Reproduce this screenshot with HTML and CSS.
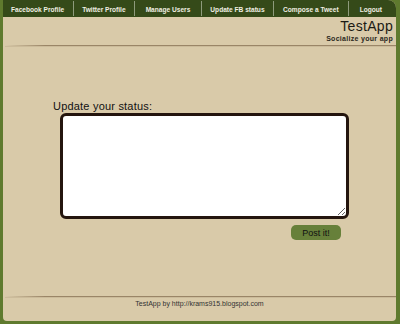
FILE: index.html
```html
<!DOCTYPE html>
<html lang="en">
<head>
  <meta charset="UTF-8" />
  <title>TestApp | Update FB status</title>
  <link rel="stylesheet" href="styles.css">
</head>
<body>

<div class="page">
  <ul class="menu">
    <li><a href="#">Facebook Profile</a></li>
    <li><a href="#">Twitter Profile</a></li>
    <li class="wide"><a href="#">Manage Users</a></li>
    <li><a href="#">Update FB status</a></li>
    <li><a href="#">Compose a Tweet</a></li>
    <li><a href="#">Logout</a></li>
  </ul>

  <div class="header">
    <h1>TestApp</h1>
    <p>Socialize your app</p>
  </div>
  <div class="rule"></div>

  <div class="content">
    <form class="status-form">
      <h3>Update your status:</h3>
      <textarea class="status-box"></textarea>
      <div class="actions">
        <button type="button">Post it!</button>
      </div>
    </form>
  </div>

  <div class="rule"></div>
  <div class="footer">TestApp by http://krams915.blogspot.com</div>
</div>

</body>
</html>
```

FILE: styles.css
```css
html, body {
  margin: 0;
  height: 100%;
}
body {
  font-family: 'Liberation Sans', Arial, sans-serif;
  background-color: #5f7a2e;
}
.page {
  margin: 0 4px 0 3px;
  height: 321px;
  background: #d9caa9;
  border-radius: 0 8px 4px 4px;
  display: flex;
  flex-direction: column;
}
.menu {
  list-style: none;
  margin: 0;
  padding: 0;
  height: 17px;
  display: flex;
  align-items: center;
  background: #354a19;
  border-radius: 0 8px 0 0;
}
.menu li {
  padding: 0 8.5px;
  border-right: 1px solid #8e9a7c;
  line-height: 12px;
  white-space: nowrap;
}
.menu li:first-child {
  padding-left: 8px;
}
.menu li.wide {
  padding: 0 10.5px;
}
.menu li:nth-child(5) {
  padding: 0 9px;
}
.menu li:last-child {
  border-right: none;
  padding-left: 11px;
}
.menu a {
  color: #f0efe2;
  font-size: 6.6px;
  font-weight: bold;
  text-decoration: none;
}
.header {
  text-align: right;
  padding: 2px 3px 0 0;
  color: #1c1a14;
}
.header h1 {
  margin: 0;
  font-size: 14px;
  font-weight: normal;
  line-height: 15px;
  letter-spacing: 0.3px;
}
.header p {
  margin: 0;
  font-size: 7px;
  line-height: 9px;
  font-weight: bold;
  letter-spacing: 0.3px;
  color: #2a2720;
}
.rule {
  height: 1px;
  margin: 2px 0 0 2px;
  background: linear-gradient(to right, rgba(150,130,100,0), #9a8567 40px, #9a8567);
  box-shadow: 0 1px 0 #cbbb9a;
}
.content {
  flex: 1;
}
.status-form {
  margin: 54px 0 0 50px;
}
.status-form h3 {
  margin: 0 0 1px;
  font-size: 11px;
  font-weight: normal;
  color: #111;
  letter-spacing: 0.2px;
}
.status-box {
  display: block;
  margin-left: 7px;
  width: 289px;
  height: 106px;
  box-sizing: border-box;
  border: 3px solid #24150e;
  border-radius: 6px;
  background: #fff;
  padding: 4px;
}
.actions {
  width: 288px;
  display: flex;
  justify-content: flex-end;
  margin-top: 6px;
}
.actions button {
  width: 50px;
  height: 15px;
  padding: 0;
  border: none;
  border-radius: 5px;
  background-color: #67803a;
  color: #111;
  font-family: 'Liberation Sans', Arial, sans-serif;
  font-size: 9px;
  cursor: pointer;
}
.footer {
  text-align: center;
  font-size: 7px;
  color: #333;
  padding: 3px 0 0;
  height: 24px;
  box-sizing: border-box;
}
```
